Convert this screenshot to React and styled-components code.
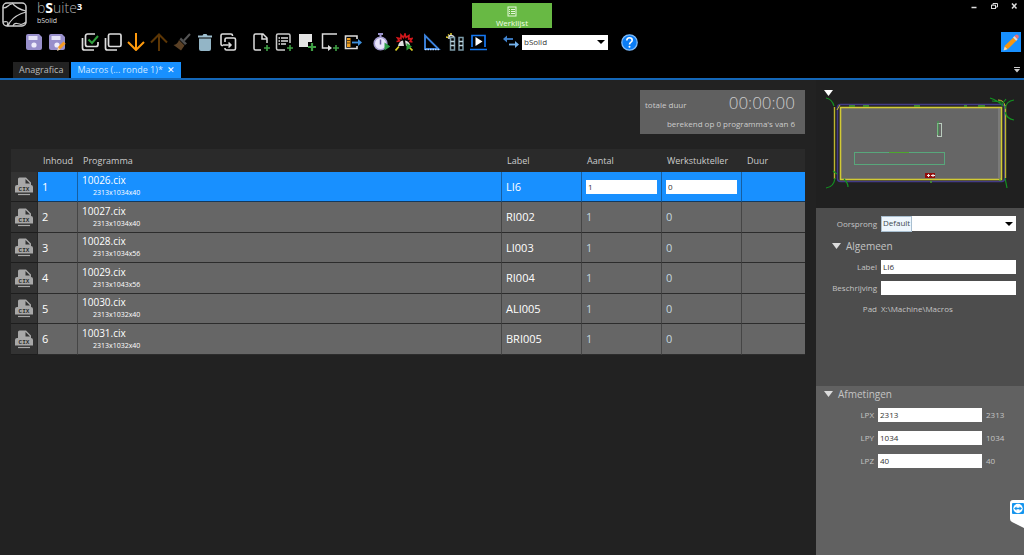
import React, { useState } from 'react';
import styled, { createGlobalStyle } from 'styled-components';

const GlobalStyle = createGlobalStyle`
  * {
    box-sizing: border-box;
  }
  body {
    margin: 0;
    background: #222;
    color: #d8d8d8;
    font-family: 'Open Sans', 'Noto Sans', sans-serif;
    font-size: 9px;
    line-height: 12px;
  }
  button, input, select {
    font: inherit;
    border: none;
    border-radius: 0;
    outline: none;
    padding: 0;
  }
`;
const Page = styled.div`
  min-height: 100vh;
  display: flex;
  flex-direction: column;
`;
const Header = styled.header`
  background: #000;
  border-bottom: 2px solid #1467b8;
`;
const TitleBar = styled.div`
  display: grid;
  grid-template-columns: 1fr 80px 1fr;
  height: 28px;
`;
const Brand = styled.div`
  display: flex;
  gap: 10px;
  padding: 2px 0 0 2px;
`;
const BrandText = styled.div`
  display: flex;
  flex-direction: column;
  gap: 3px;
`;
const BrandName = styled.div`
  font-size: 14px;
  line-height: 12px;
  font-weight: 300;
  color: #aaa;
  b {
    color: #fff;
    font-weight: 700;
  }
  sup {
    color: #fff;
    font-size: 9px;
    font-weight: 700;
    line-height: 0;
    vertical-align: 3px;
  }
`;
const BrandSub = styled.div`
  font-size: 7px;
  line-height: 8px;
  color: #ddd;
`;
const WorkButton = styled.button`
  display: flex;
  flex-direction: column;
  align-items: center;
  justify-content: flex-end;
  gap: 1px;
  margin-top: 3px;
  background: #68b944;
  color: #f0ffe8;
  font-size: 8px;
  line-height: 10px;
`;
const WindowButtons = styled.div`
  display: flex;
  justify-content: flex-end;
  gap: 8px;
  padding-right: 4px;
`;
const WindowButton = styled.button`
  width: 12px;
  height: 12px;
  background: transparent;
  svg {
    display: block;
  }
`;
const Toolbar = styled.div`
  display: flex;
  align-items: center;
  height: 28px;
  padding: 0 3px 0 22px;
`;
const Group = styled.div`
  display: flex;
  align-items: center;
  margin-right: ${(props) => (props.$tight ? '5px' : '10px')};
`;
const Tool = styled.button`
  display: flex;
  align-items: center;
  justify-content: center;
  width: 23px;
  height: 20px;
  background: transparent;
`;
const EditButton = styled.button`
  width: 20px;
  height: 20px;
  margin-left: auto;
  background: #1890ff;
  svg {
    display: block;
  }
`;
const Select = styled.select`
  appearance: none;
  width: ${(props) => props.$width || '100%'};
  height: 15px;
  padding: 0 14px 1px 2px;
  color: #333;
  font-size: 8px;
  background: #fff
    url("data:image/svg+xml,%3Csvg xmlns='http://www.w3.org/2000/svg' viewBox='0 0 8 4'%3E%3Cpath d='M0 0h8L4 4z'/%3E%3C/svg%3E")
    no-repeat right 3px center / 8px 4px;
`;
const FocusSelect = styled.div`
  position: relative;
  &::after {
    content: '';
    position: absolute;
    top: 0;
    left: 0;
    width: 29px;
    height: 14px;
    border: 1px solid #a9bfd0;
    background: rgba(140, 195, 240, 0.15);
    pointer-events: none;
  }
`;
const Tabs = styled.nav`
  display: flex;
  gap: 2px;
  height: 16px;
  margin-top: 6px;
  padding: 0 3px 0 13px;
`;
const Tab = styled.button`
  padding: 0 6px;
  white-space: nowrap;
  color: ${(props) => (props.$active ? '#cfe8ff' : '#bbb')};
  background: ${(props) => (props.$active ? '#1890ff' : '#222')};
  span {
    margin-left: 4px;
    color: #fff;
  }
`;
const TabMenu = styled.button`
  display: flex;
  align-items: center;
  margin-left: auto;
  background: transparent;
`;
const Main = styled.main`
  flex: 1;
  display: flex;
`;
const Content = styled.section`
  flex: 1;
  display: flex;
  flex-direction: column;
  padding: 10px 11px 0 11px;
`;
const Summary = styled.div`
  align-self: flex-end;
  width: 165px;
  height: 44px;
  margin-bottom: 15px;
  padding: 2px 10px 0 5px;
  background: #606060;
  color: #ccc;
  font-size: 8px;
`;
const SummaryRow = styled.div`
  display: flex;
  justify-content: space-between;
  align-items: center;
  height: 24px;
  padding-top: 2px;
`;
const Clock = styled.span`
  font-size: 17px;
  font-weight: 300;
  line-height: 20px;
  margin-bottom: 5px;
`;
const Calculated = styled.p`
  margin: 2px 0 0;
  text-align: right;
`;
const Table = styled.table`
  width: 100%;
  table-layout: fixed;
  border-collapse: separate;
  border-spacing: 0;
`;
const Col = styled.col`
  width: ${(props) => props.$width};
`;
const Th = styled.th`
  height: 23px;
  padding: 0 5px;
  text-align: left;
  font-weight: 400;
  color: #ccc;
  background: #2a2a2a;
  white-space: nowrap;
`;
const Row = styled.tr`
  background: ${(props) => (props.$selected ? '#1890ff' : '#666')};
  color: #fff;
  &:nth-child(even) td {
    height: 31px;
  }
`;
const Td = styled.td`
  height: 30px;
  padding: 0 4px;
  font-size: 11px;
  font-weight: ${(props) => (props.$dim ? 400 : 500)};
  color: ${(props) => (props.$dim ? '#c4d6de' : 'inherit')};
  border-bottom: 1px solid rgba(20, 20, 20, 0.7);
  border-right: 1px solid rgba(20, 20, 20, 0.4);
  &:last-child {
    border-right: none;
  }
`;
const IconTd = styled(Td)`
  background: #333;
  svg {
    display: block;
  }
`;
const FileName = styled.div`
  font-size: 10px;
  line-height: 13px;
`;
const FileSize = styled.div`
  padding-left: 11px;
  font-size: 7px;
  font-weight: 400;
  line-height: 12px;
`;
const Input = styled.input`
  display: block;
  width: ${(props) => props.$width || '100%'};
  height: 14px;
  padding: 0 2px;
  background: #fff;
  color: #333;
  font-size: 8px;
`;
const Side = styled.aside`
  display: flex;
  flex-direction: column;
  width: 208px;
`;
const Preview = styled.div`
  height: 128px;
  background: #202020;
  svg {
    display: block;
  }
`;
const Panel = styled.section`
  background: ${(props) => (props.$light ? '#616161' : '#4d4d4d')};
  color: #c4c4c4;
  font-size: 8px;
`;
const GeneralPanel = styled(Panel)`
  min-height: 178px;
  padding: 8px 8px 0 0;
`;
const SizePanel = styled(Panel)`
  flex: 1;
  padding: 2px 8px 0 0;
`;
const Heading = styled.h2`
  display: flex;
  align-items: center;
  gap: 5px;
  margin: 0;
  height: 25px;
  padding: 4px 0 0 16px;
  font-size: 10px;
  font-weight: 400;
`;
const SizeHeading = styled(Heading)`
  height: 15px;
  padding: 0 0 3px 8px;
`;
const Field = styled.div`
  display: grid;
  grid-template-columns: 61px 1fr;
  column-gap: 4px;
  align-items: center;
  height: ${(props) => (props.$short ? '15px' : '21px')};
`;
const SizeField = styled(Field)`
  grid-template-columns: 58px 104px 1fr;
  height: 23px;
`;
const FieldLabel = styled.label`
  text-align: right;
`;
const FieldName = styled.span`
  text-align: right;
`;
const Remote = styled.button`
  position: fixed;
  top: 500px;
  right: 0;
  width: 14px;
  height: 28px;
  background: transparent;
  svg {
    display: block;
  }
`;

const Icon = ({ children, size = 18 }) => (
  <svg width={size} height={size} viewBox="0 0 18 18" fill="none" aria-hidden="true">
    {children}
  </svg>
);
const Plus = ({ x = 14, y = 14 }) => (
  <path d={`M${x - 3} ${y}h6M${x} ${y - 3}v6`} stroke="#3fa045" strokeWidth="1.6" />
);
const Disk = () => (
  <>
    <path d="M1 3a2 2 0 0 1 2-2h11l3 3v11a2 2 0 0 1-2 2H3a2 2 0 0 1-2-2z" fill="#988fcb" />
    <path d="M3.500 3h9v4h-9z" fill="#e6e3f7" />
    <circle cx="9" cy="12" r="2.600" fill="#eeecfb" />
  </>
);
const Down = ({ color = '#fff' }) => (
  <svg width="9" height="6" viewBox="0 0 9 6" aria-hidden="true">
    <path d="M0 0h9L4.500 6z" fill={color} />
  </svg>
);

const fileTools = [
  { label: 'Opslaan', icon: <Disk /> },
  {
    label: 'Opslaan als',
    icon: (
      <>
        <Disk />
        <path d="M9.500 17l1-3.500 5-5 2.200 2.200-5 5z" fill="#f59a23" />
        <path d="M9 18l1.200-3.500 2 2z" fill="#f6d9b0" />
      </>
    ),
  },
];
const editTools = [
  {
    label: 'Alles selecteren',
    icon: (
      <>
        <path d="M14 1H6.500a2 2 0 0 0-2 2v8.500a2 2 0 0 0 2 2H15a2 2 0 0 0 2-2V9" stroke="#ddd" strokeWidth="1.700" />
        <path d="M1.500 5v10a2 2 0 0 0 2 2H13" stroke="#ddd" strokeWidth="1.700" />
        <path d="M7.500 6.500l3.500 3.500 6-7" stroke="#2f9e3b" strokeWidth="2" />
      </>
    ),
  },
  {
    label: 'Selectie opheffen',
    icon: (
      <>
        <rect x="4.500" y="1" width="12.500" height="12.500" rx="1.500" stroke="#ddd" strokeWidth="1.700" />
        <path d="M1.500 5v10a2 2 0 0 0 2 2H13" stroke="#ddd" strokeWidth="1.700" />
      </>
    ),
  },
  { label: 'Omlaag', icon: <path d="M9 0v17M1 9l8 8 8-8" stroke="#ff9a0c" strokeWidth="2" /> },
  { label: 'Omhoog', icon: <path d="M9 18V2M1 9.500l8-8 8 8" stroke="#5c3605" strokeWidth="2" /> },
  {
    label: 'Wissen',
    icon: (
      <>
        <path d="M17 1l-6 6.500" stroke="#555" strokeWidth="2" />
        <path d="M8 4.500l6 6-2 1.500-5.500-5.500z" fill="#505050" />
        <path d="M6 7l5.500 5.500-3.500 5L.5 12q4-.5 5.500-5z" fill="#5a4025" />
      </>
    ),
  },
  {
    label: 'Verwijderen',
    icon: (
      <>
        <path d="M2 2.500h4.500L7.500 1h3l1 1.500H16v2H2z" fill="#9fc0d0" />
        <path d="M3 5.500h12V16a2 2 0 0 1-2 2H5a2 2 0 0 1-2-2z" fill="#93b5c6" />
      </>
    ),
  },
  {
    label: 'Dupliceren',
    icon: (
      <>
        <path d="M4 12.500H3.500a1.500 1.500 0 0 1-1.500-1.500V2.500A1.500 1.500 0 0 1 3.500 1H12a1.500 1.500 0 0 1 1.500 1.500V3" stroke="#ddd" strokeWidth="1.600" />
        <path d="M6 9V6.500A1.500 1.500 0 0 1 7.500 5H15a1.500 1.500 0 0 1 1.500 1.500v9A1.500 1.500 0 0 1 15 17H7.500A1.500 1.500 0 0 1 6 15.500V15" stroke="#ddd" strokeWidth="1.600" />
        <path d="M4 12h7.500M9.500 9.500L12 12l-2.500 2.500" stroke="#ddd" strokeWidth="1.500" />
      </>
    ),
  },
];
const addTools = [
  {
    label: 'Nieuw programma',
    icon: (
      <>
        <path d="M9 17H3.500A1.500 1.500 0 0 1 2 15.500v-13A1.500 1.500 0 0 1 3.500 1H11l4 4v5M10 1v5h5" stroke="#ddd" strokeWidth="1.500" />
        <Plus x={15} y={15} />
      </>
    ),
  },
  {
    label: 'Nieuwe lijst',
    icon: (
      <>
        <path d="M10 17H3a1.500 1.500 0 0 1-1.500-1.500v-13A1.500 1.500 0 0 1 3 1h10.500A1.500 1.500 0 0 1 15 2.500V10" stroke="#ccc" strokeWidth="1.500" />
        <path d="M3.500 5H5m1 0h7M3.500 8H5m1 0h7M3.500 11H5m1 0h5" stroke="#ddd" strokeWidth="1.400" />
        <Plus x={15} y={15} />
      </>
    ),
  },
  {
    label: 'Nieuw paneel',
    icon: (
      <>
        <path d="M1 1h13v8h-4v5H1z" fill="#e4e4e4" />
        <path d="M10 14h8M14 10v8" stroke="#3fa045" strokeWidth="2.200" />
      </>
    ),
  },
  {
    label: 'Nieuwe bewerking',
    icon: (
      <>
        <path d="M16 1H1.500v14H8" stroke="#ddd" strokeWidth="1.500" />
        <path d="M7 12l4 3-4 3z" fill="#ddd" />
        <Plus x={15} y={15} />
      </>
    ),
  },
  {
    label: 'Exporteren',
    icon: (
      <>
        <path d="M13 6V3H1.500v12.500H13V13" stroke="#ddd" strokeWidth="1.600" />
        <path d="M3 5h3.500v9H3z" fill="#f0a020" />
        <path d="M3 7.500h3.500M3 10h3.500" stroke="#5b3d10" />
        <path d="M8 9.500h7" stroke="#3d8fdd" strokeWidth="1.800" />
        <path d="M14 6l4 3.500-4 3.500z" fill="#3d8fdd" />
      </>
    ),
  },
];
const checkTools = [
  {
    label: 'Duur berekenen',
    icon: (
      <>
        <path d="M6 1h5M8.500 1v3" stroke="#9b93cc" strokeWidth="2" />
        <circle cx="8.500" cy="10.500" r="6.300" fill="#e8e4fb" stroke="#a49ccf" strokeWidth="1.600" />
        <path d="M8.500 6.500v5" stroke="#655d99" strokeWidth="1.500" />
        <path d="M12.500 9.500l6 4-6 4z" fill="#2f9e4a" />
      </>
    ),
  },
  {
    label: 'Botsing controleren',
    icon: (
      <>
        <path
          d="M1.500 8.500l3-.5-2-3 3.500.8L6 2l2.500 2.500L10 1l1 3.500L14 2.500l-.3 3.500 3.300-.5-2 3 2.500.5"
          stroke="#d3171b"
          strokeWidth="1.600"
        />
        <path d="M3 13q1-5 5-5.500L9 13zM10 7.500q4 .5 5 4.500l-4 1z" fill="#ddd" />
        <path d="M.5 17.500L4 13.500M17.500 17.500l-3-3" stroke="#d8cf25" strokeWidth="1.700" />
        <path d="M11.500 10l5.500 3.500-5.500 4z" fill="#2f9e3b" />
      </>
    ),
  },
];
const machineTools = [
  {
    label: 'Geometrie',
    icon: (
      <>
        <path d="M2 2.500V16h13.500z" stroke="#3b82dc" strokeWidth="1.900" />
        <path d="M2 16.500h14" stroke="#b9d8fa" strokeWidth="1.700" strokeDasharray="1.500 1" />
      </>
    ),
  },
  {
    label: 'Uitrusting',
    icon: (
      <>
        <path d="M0 4l2 .5M2 1.500l2 1.500M5 0v2" stroke="#e2ce2a" strokeWidth="1.500" />
        <path d="M3 6V4q0-1.500 2-1.500T8 4" stroke="#ddd" strokeWidth="1.600" />
        <path d="M4.500 4.500h4V17h-4zM13 4.500h4V17h-4z" stroke="#7c9ba8" strokeWidth="1.500" />
        <path d="M4.500 8.500h4m-4 4h4M13 8.500h4m-4 4h4" stroke="#bdd3dc" strokeWidth="1.400" />
      </>
    ),
  },
  {
    label: 'Simulatie',
    icon: (
      <>
        <path d="M3 14V2.500h13V14M1 16.500h17" stroke="#1677f0" strokeWidth="1.700" />
        <path d="M6.500 4l7 4.500-7 4.500z" fill="#fff" />
      </>
    ),
  },
];

const programs = [
  { file: '10026.cix', size: '2313x1034x40', label: 'LI6' },
  { file: '10027.cix', size: '2313x1034x40', label: 'RI002' },
  { file: '10028.cix', size: '2313x1034x56', label: 'LI003' },
  { file: '10029.cix', size: '2313x1043x56', label: 'RI004' },
  { file: '10030.cix', size: '2313x1032x40', label: 'ALI005' },
  { file: '10031.cix', size: '2313x1032x40', label: 'BRI005' },
];

const ToolGroup = ({ tools, tight }) => (
  <Group $tight={tight}>
    {tools.map((tool) => (
      <Tool key={tool.label} aria-label={tool.label}>
        <Icon>{tool.icon}</Icon>
      </Tool>
    ))}
  </Group>
);

const CixIcon = () => (
  <svg width="18" height="19" viewBox="0 0 18 19" aria-hidden="true">
    <path d="M3 8V2a1.500 1.500 0 0 1 1.500-1.500H11L16 5.500V8a2 2 0 0 1 2 2v5.500H0V10a2 2 0 0 1 2-2z" fill="#a8a8a8" />
    <path d="M10.500 2v4.500H15z" fill="#333" />
    <text x="9" y="14" textAnchor="middle" fontFamily="Liberation Mono" fontSize="6" fontWeight="700" fill="#2c2c2c">
      CIX
    </text>
    <path d="M3 17.500h12" stroke="#a8a8a8" strokeWidth="1.200" />
  </svg>
);

const Drawing = () => (
  <svg width="208" height="128" viewBox="0 0 208 128" fill="none" role="img" aria-label="Werkstuk">
    <path d="M8 10h9l-4.500 6z" fill="#fff" />
    <rect x="21.500" y="24.500" width="167" height="77" rx="3" stroke="#433b86" strokeWidth="1.600" />
    <rect x="24.500" y="27.500" width="161" height="72" fill="#666" stroke="#d2ca34" strokeWidth="1.600" />
    <path d="M183 28v70" stroke="#8e8e8e" />
    <path d="M18.500 27v72M189.500 25v73" stroke="#bdb62f" strokeWidth="1.400" />
    <path d="M182 20q6 0 7 6M24 25l-3 5" stroke="#c5bd32" />
    <path
      d="M10 18q6 1 8 8M10 108q8-1 9-10M28 99q4 4 4 8M17 91l4 3M174 18q7 2 13 8M176 21l10 1M198 20q-8 1-9 9M198 40q-7-1-9-8M189 98l2 10M186 24l4-5"
      stroke="#139321"
      strokeWidth="1.200"
    />
    <path d="M33 26h6M47 26h6M98 26h6M148 26h3M162 26h7M115 101v2M183 100h2" stroke="#48a52c" strokeWidth="1.400" />
    <rect x="121.500" y="43.500" width="4" height="13" stroke="#b9cbbd" />
    <path d="M122 41v14" stroke="#35a545" />
    <rect x="38.500" y="72.500" width="90" height="12" stroke="#58a77b" />
    <path d="M73 72.500h20" stroke="#4ca82e" />
    <path d="M109 93h10v5h-10z" fill="#920b0b" />
    <path d="M111 95.500h3M112.500 94v3M115 95.500h4M117 94v3" stroke="#eee" />
  </svg>
);

const App = () => {
  const [machine, setMachine] = useState('bSolid');
  const [origin, setOrigin] = useState('Default');
  const [dims, setDims] = useState({ LPX: '2313', LPY: '1034', LPZ: '40' });

  return (
    <>
      <GlobalStyle />
      <Page>
        <Header>
          <TitleBar>
            <Brand>
              <svg width="25" height="25" viewBox="0 0 25 25" fill="none" stroke="#ccc" aria-hidden="true">
                <rect x="1" y="1" width="23" height="23" rx="4" strokeWidth="1.500" />
                <path
                  d="M1 6q3 0 5-2 2-2 4-2M10 1q5 6 14 8M24 10Q13 13 8 20q-1 2-2 4M1 20q5-1 5 1l-1 3M11 24q1-3 4-2.500t4 1q3-.5 5-2.500"
                  strokeWidth="1.200"
                />
              </svg>
              <BrandText>
                <BrandName>
                  b<b>S</b>uite<sup>3</sup>
                </BrandName>
                <BrandSub>bSolid</BrandSub>
              </BrandText>
            </Brand>
            <WorkButton>
              <svg width="10" height="11" viewBox="0 0 10 11" fill="none" stroke="#e6f7dc" aria-hidden="true">
                <rect x="1" y="1" width="8" height="9" />
                <path d="M2 3.500h1m1 0h4M2 5.500h1m1 0h4M2 7.500h1m1 0h4" />
              </svg>
              Werklijst
            </WorkButton>
            <WindowButtons>
              <WindowButton aria-label="Minimaliseren">
                <svg width="12" height="12" viewBox="0 0 12 12">
                  <path d="M3.500 7.500h5" stroke="#ddd" strokeWidth="1.500" />
                </svg>
              </WindowButton>
              <WindowButton aria-label="Herstellen">
                <svg width="12" height="12" viewBox="0 0 12 12" fill="none" stroke="#ddd">
                  <path d="M5 5V3.500h4.500V7H8" />
                  <rect x="3.500" y="5.200" width="4" height="3.300" />
                </svg>
              </WindowButton>
              <WindowButton aria-label="Sluiten">
                <svg width="12" height="12" viewBox="0 0 12 12">
                  <path d="M4 3.500l4.500 5M8.500 3.500L4 8.500" stroke="#ddd" strokeWidth="1.500" />
                </svg>
              </WindowButton>
            </WindowButtons>
          </TitleBar>
          <Toolbar>
            <ToolGroup tools={fileTools} />
            <ToolGroup tools={editTools} />
            <ToolGroup tools={addTools} tight />
            <ToolGroup tools={checkTools} tight />
            <ToolGroup tools={machineTools} />
            <Group>
              <Tool aria-label="Wisselen">
                <Icon>
                  <path d="M3 6h8" stroke="#3f82cf" strokeWidth="1.800" />
                  <path d="M5 2.500v7L1 6z" fill="#3f82cf" />
                  <path d="M7 11.500h7" stroke="#74b2ea" strokeWidth="1.800" />
                  <path d="M13 8v7l4-3.500z" fill="#74b2ea" />
                </Icon>
              </Tool>
              <Select
                $width="86px"
                aria-label="Machine"
                value={machine}
                onChange={(e) => setMachine(e.target.value)}
              >
                <option>bSolid</option>
              </Select>
            </Group>
            <Tool aria-label="Help">
              <svg width="17" height="17" viewBox="0 0 17 17" fill="none" aria-hidden="true">
                <circle cx="8.500" cy="8.500" r="7.700" fill="#0a7cf5" stroke="#7fbcfb" strokeWidth="1.300" />
                <path d="M5.800 6.500q0-2.700 2.700-2.700t2.700 2.400q0 1.300-1.500 2.200-1.200.8-1.200 2.200" stroke="#fff" strokeWidth="1.600" />
                <circle cx="8.500" cy="12.800" r="1" fill="#fff" />
              </svg>
            </Tool>
            <EditButton aria-label="Bewerken">
              <svg width="20" height="20" viewBox="0 0 20 20" aria-hidden="true">
                <path d="M3 18l1-4.500L13 5l3 3-8.500 8.500z" fill="#f9960f" />
                <path d="M2.500 18.500l1.200-4 2.800 2.800z" fill="#f3dcb8" />
                <path d="M12 5.500l1.500-1.500 3.200 3.200-1.500 1.500z" fill="#ddd" />
                <path d="M13.500 4l1-1q1.500-1 2.700.3 1 1.300.3 2.500l-1 1.200z" fill="#ee6f76" />
              </svg>
            </EditButton>
          </Toolbar>
          <Tabs>
            <Tab>Anagrafica</Tab>
            <Tab $active>
              Macros (... ronde 1)*<span>✕</span>
            </Tab>
            <TabMenu aria-label="Tabbladen">
              <svg width="8" height="8" viewBox="0 0 8 8" aria-hidden="true">
                <path d="M1 1.500h6" stroke="#ccc" />
                <path d="M1 3h6L4 6.500z" fill="#ccc" />
              </svg>
            </TabMenu>
          </Tabs>
        </Header>
        <Main>
          <Content>
            <Summary>
              <SummaryRow>
                <span>totale duur</span>
                <Clock>00:00:00</Clock>
              </SummaryRow>
              <Calculated>berekend op 0 programma's van 6</Calculated>
            </Summary>
            <Table>
              <colgroup>
                <Col $width="27px" />
                <Col $width="40px" />
                <Col />
                <Col $width="80px" />
                <Col $width="80px" />
                <Col $width="80px" />
                <Col $width="63px" />
              </colgroup>
              <thead>
                <tr>
                  <Th />
                  <Th>Inhoud</Th>
                  <Th>Programma</Th>
                  <Th>Label</Th>
                  <Th>Aantal</Th>
                  <Th>Werkstukteller</Th>
                  <Th>Duur</Th>
                </tr>
              </thead>
              <tbody>
                {programs.map((program, i) => {
                  const selected = i === 0;
                  return (
                    <Row key={program.file} $selected={selected}>
                      <IconTd>
                        <CixIcon />
                      </IconTd>
                      <Td>{i + 1}</Td>
                      <Td>
                        <FileName>{program.file}</FileName>
                        <FileSize>{program.size}</FileSize>
                      </Td>
                      <Td>{program.label}</Td>
                      <Td $dim>{selected ? <Input aria-label="Aantal" defaultValue="1" /> : 1}</Td>
                      <Td $dim>{selected ? <Input aria-label="Werkstukteller" defaultValue="0" /> : 0}</Td>
                      <Td />
                    </Row>
                  );
                })}
              </tbody>
            </Table>
          </Content>
          <Side>
            <Preview>
              <Drawing />
            </Preview>
            <GeneralPanel>
              <Field $short>
                <FieldLabel htmlFor="origin">Oorsprong</FieldLabel>
                <FocusSelect>
                  <Select id="origin" value={origin} onChange={(e) => setOrigin(e.target.value)}>
                    <option>Default</option>
                  </Select>
                </FocusSelect>
              </Field>
              <Heading>
                <Down color="#ddd" />
                Algemeen
              </Heading>
              <Field>
                <FieldLabel htmlFor="label">Label</FieldLabel>
                <Input id="label" defaultValue="LI6" />
              </Field>
              <Field>
                <FieldLabel htmlFor="description">Beschrijving</FieldLabel>
                <Input id="description" />
              </Field>
              <Field>
                <FieldName>Pad</FieldName>
                <span>X:\Machine\Macros</span>
              </Field>
            </GeneralPanel>
            <SizePanel $light>
              <SizeHeading>
                <Down color="#ddd" />
                Afmetingen
              </SizeHeading>
              {Object.keys(dims).map((name) => (
                <SizeField key={name}>
                  <FieldLabel htmlFor={name}>{name}</FieldLabel>
                  <Input
                    id={name}
                    value={dims[name]}
                    onChange={(e) => setDims({ ...dims, [name]: e.target.value })}
                  />
                  <span>{dims[name]}</span>
                </SizeField>
              ))}
            </SizePanel>
          </Side>
        </Main>
      </Page>
      <Remote aria-label="Extern beheer">
        <svg width="14" height="28" viewBox="0 0 14 28" aria-hidden="true">
          <path d="M14 0H3Q0 0 0 3v16q0 2 2 3l12 6z" fill="#fff" />
          <rect x="2" y="3" width="12" height="11" rx="1" fill="#1595ee" />
          <circle cx="8" cy="8.500" r="4.700" fill="#fff" />
          <path d="M4 8.500l2.500-2v1.300h3V6.500l2.500 2-2.500 2V9.200h-3v1.300z" fill="#1595ee" />
        </svg>
      </Remote>
    </>
  );
};

export default App;
